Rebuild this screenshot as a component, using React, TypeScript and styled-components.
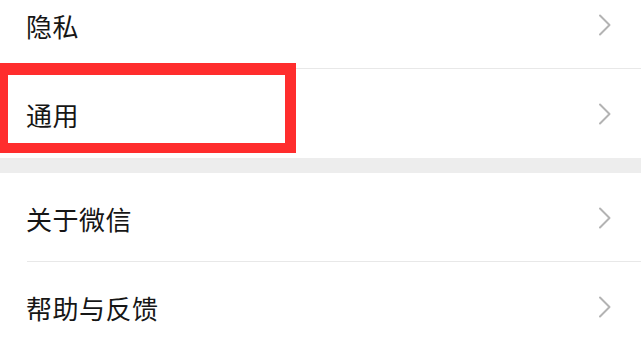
import styled, { createGlobalStyle } from "styled-components";

const GlobalStyle = createGlobalStyle`
  html, body {
    margin: 0;
    padding: 0;
    background: #ffffff;
    overflow: hidden;
  }
  body {
    font-family: "Noto Sans CJK SC", "Noto Sans", sans-serif;
  }
`;

const items = [
  { group: 0, label: "隐私" },
  { group: 0, label: "通用", highlighted: true },
  { group: 1, label: "关于微信" },
  { group: 1, label: "帮助与反馈" },
];

function Chevron() {
  return (
    <svg width="14" height="22" viewBox="0 0 14 22" fill="none">
      <path d="M2 1.5 L11.5 11 L2 20.5" stroke="#b3b3b3" strokeWidth="2" strokeLinecap="round" strokeLinejoin="round" />
    </svg>
  );
}

function App() {
  const groups = [0, 1].map((g) => items.filter((i) => i.group === g));
  return (
    <Page>
      <GlobalStyle />
      <Scroller>
        {groups.map((group, gi) => (
          <Group key={gi}>
            {group.map((item, idx) => (
              <Row key={item.label} $last={idx === group.length - 1}>
                {item.highlighted && <Highlight />}
                <Label>{item.label}</Label>
                <Chevron />
              </Row>
            ))}
          </Group>
        ))}
      </Scroller>
    </Page>
  );
}

const Page = styled.div`
  width: 641px;
  height: 338px;
  overflow: hidden;
  background: #ededed;
`;

const Scroller = styled.div`
  margin-top: -20px;
  display: flex;
  flex-direction: column;
  gap: 15px;
`;

const Group = styled.div`
  background: #ffffff;
  display: flex;
  flex-direction: column;
`;

const Row = styled.div<{ $last: boolean }>`
  position: relative;
  height: 89px;
  box-sizing: border-box;
  display: flex;
  align-items: center;
  justify-content: space-between;
  padding: 0 29px 0 26px;

  &::after {
    content: "";
    display: ${(p) => (p.$last ? "none" : "block")};
    position: absolute;
    left: 27px;
    right: 0;
    bottom: 0;
    height: 1px;
    background: #e8e8e8;
  }
`;

const Label = styled.span`
  font-size: 26px;
  color: #161616;
  letter-spacing: 0.5px;
  line-height: 1;
  margin-top: 3px;
`;

const Highlight = styled.div`
  position: absolute;
  left: 0;
  top: -6px;
  width: 296px;
  height: 90px;
  box-sizing: border-box;
  border: 12px solid #ff2d2d;
  border-left-width: 8px;
  border-right-width: 11px;
  border-bottom-width: 10px;
  z-index: 1;
`;

export default App;
